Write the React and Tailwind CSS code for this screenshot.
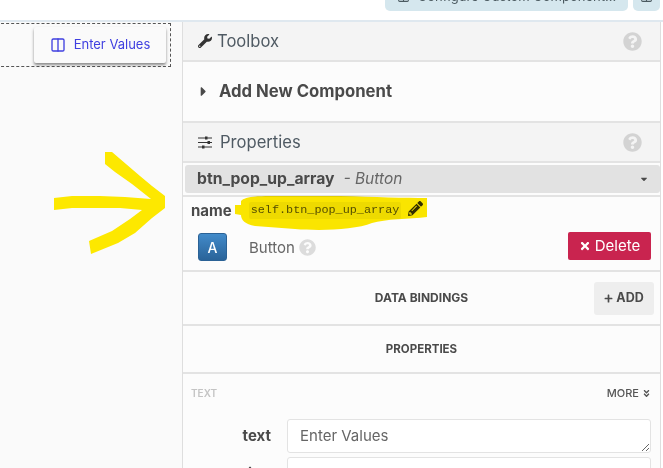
import React from 'react';
import { FaWrench, FaQuestionCircle, FaPencilAlt, FaTimes, FaPlus, FaCaretRight, FaCaretDown, FaAngleDoubleDown } from 'react-icons/fa';
import { LuColumns2 } from 'react-icons/lu';

function PanelHeader({ icon, title }) {
    return (
        <div className="h-[40px] flex items-center pl-[15px] pr-[18px] bg-[#f4f4f4] border-b-2 border-[#e3e3e3]">
            {icon}
            <span className="text-[16.6px] text-[#4f5a63]">{title}</span>
            <FaQuestionCircle className="ml-auto text-[19px] text-[#d3d3d3]" />
        </div>
    );
}

function SlidersIcon() {
    return (
        <svg className="mr-[8px] text-[#333]" width="14" height="13" viewBox="0 0 14 13" fill="currentColor">
            <rect x="0" y="1.5" width="14" height="1" />
            <rect x="0" y="6" width="14" height="1" />
            <rect x="0" y="10.5" width="14" height="1" />
            <rect x="7" y="0.5" width="2.5" height="3" />
            <rect x="9.5" y="5" width="2.5" height="3" />
            <rect x="4" y="9.5" width="2.5" height="3" />
        </svg>
    );
}

export default function App() {
    return (
        <div className="relative w-[663px] h-[468px] overflow-hidden bg-white font-['Inter','Noto_Sans',sans-serif] text-[#4a4a4a]">
            {/* top toolbar, cut off by the crop */}
            <div className="h-[22px] flex justify-end gap-[5px] pr-[3px] border-b-2 border-[#dfe8ef] overflow-hidden">
                <div className="w-[243px] h-[29px] -mt-[18px] flex items-center justify-center gap-2 rounded-[5px] bg-[#d5e7ee] text-[13px] text-[#4b5a60] whitespace-nowrap">
                    <LuColumns2 className="text-[13px]" />
                    Configure Custom Component...
                </div>
                <div className="w-[27px] h-[29px] -mt-[18px] flex items-center justify-center rounded-[5px] bg-[#d5e7ee] text-[#4b5a60]">
                    <LuColumns2 className="text-[13px]" />
                </div>
            </div>

            <div className="flex h-[446px]">
                {/* design canvas */}
                <div className="w-[182px] shrink-0 bg-[#fafafa] pr-[11px]">
                    <div className="h-[44px] mt-[1px] -ml-[4px] flex justify-end pt-[3px] pr-[4px] border border-dashed border-[#555]">
                        <div className="w-[132px] h-[36px] flex items-center justify-center gap-[8px] rounded-[2px] bg-[#fafafa] shadow-[0_2px_3px_rgba(0,0,0,0.45)] text-[13px] text-[#3f3fe0]">
                            <LuColumns2 className="text-[16px]" />
                            Enter Values
                        </div>
                    </div>
                </div>

                {/* side panel */}
                <div className="w-[479px] shrink-0 bg-[#fcfcfc] border-x border-[#dedede]">
                    <PanelHeader icon={<FaWrench className="text-[14px] text-[#333] mr-[5px]" />} title="Toolbox" />
                    <div className="h-[61px] flex items-center pl-[13px] border-b-2 border-[#e3e3e3]">
                        <FaCaretRight className="text-[15px] mr-[8px] text-[#4a4a4a]" />
                        <span className="text-[16.7px] font-bold">Add New Component</span>
                    </div>
                    <PanelHeader icon={<SlidersIcon />} title="Properties" />

                    <div className="h-[28px] mt-[2px] ml-[2px] flex items-center pl-[12px] pr-[11px] rounded-[3px] bg-[#e2e2e2] text-[15.7px]">
                        <span className="font-bold">btn_pop_up_array</span>
                        <span className="italic text-[15.5px] text-[#666] ml-[9px]">- Button</span>
                        <FaCaretDown className="ml-auto text-[10px]" />
                    </div>

                    <div className="h-[38px] mt-[2px] flex items-start pl-[8px] pt-[3px] border-t-2 border-[#e3e3e3]">
                        <span className="text-[15px] font-bold leading-[22px]">name</span>
                        <span className="ml-[17px] mt-[2px] px-[2px] rounded-[2px] bg-[#f0f0f0] font-['Liberation_Mono',monospace] text-[11.8px] leading-[17px] text-[#555]">self.btn_pop_up_array</span>
                        <FaPencilAlt className="ml-[7px] mt-[1px] text-[15px] text-[#333]" />
                    </div>

                    <div className="h-[39px] flex items-start pl-[15px] pr-[9px] border-b-2 border-[#e3e3e3]">
                        <div className="w-[29px] h-[28px] flex items-center justify-center rounded-[3px] border border-[#2b6296] bg-gradient-to-b from-[#428bca] to-[#2a6399] text-[14px] font-medium text-white">A</div>
                        <span className="ml-[22px] mt-[4px] text-[15px] text-[#666]">Button</span>
                        <FaQuestionCircle className="ml-[4px] mt-[6px] text-[17px] text-[#dcdcdc]" />
                        <div className="ml-auto w-[83px] h-[28px] -mt-[1px] flex items-center justify-center gap-[4px] rounded-[2px] bg-[#c9244f] text-[15px] text-white">
                            <FaTimes className="text-[12px]" />
                            Delete
                        </div>
                    </div>

                    <div className="relative h-[54px] flex items-center justify-center border-b-2 border-[#e3e3e3] text-[12px] font-bold">
                        DATA BINDINGS
                        <div className="absolute left-[411px] top-[10px] w-[60px] h-[33px] flex items-center justify-center gap-[3px] rounded-[3px] bg-[#eeeeee] text-[12.5px]">
                            <FaPlus className="text-[9px]" />
                            ADD
                        </div>
                    </div>
                    <div className="h-[48px] flex items-center justify-center pt-[1px] border-b-2 border-[#e3e3e3] text-[11.5px] font-bold">PROPERTIES</div>

                    <div className="flex items-center pt-[11px] pl-[8px] pr-[9px]">
                        <span className="text-[10px] font-semibold text-[#c4c4c4]">TEXT</span>
                        <span className="ml-auto text-[11px] font-medium text-[#555]">MORE</span>
                        <FaAngleDoubleDown className="ml-[3px] text-[9px] text-[#555]" />
                    </div>

                    <div className="flex mt-[17px] pr-[9px]">
                        <span className="w-[88px] pt-[6px] text-right text-[15px] font-bold">text</span>
                        <textarea
                            readOnly
                            value="Enter Values"
                            className="ml-[16px] flex-1 h-[34px] px-[12px] py-[5px] rounded-[3px] border border-[#e3e3e3] bg-white text-[15px] leading-[22px] text-[#666]"
                        />
                    </div>
                    <div className="flex mt-[4px] pr-[9px]">
                        <span className="w-[88px] pt-[6px] text-right text-[15px] font-bold">align</span>
                        <div className="ml-[16px] flex-1 h-[34px] rounded-[3px] border border-[#e3e3e3] bg-white" />
                    </div>
                </div>
            </div>

            {/* yellow marker scribbles on top of the screenshot */}
            <svg className="absolute inset-0 pointer-events-none" width="663" height="468" viewBox="0 0 663 468">
                <path
                    fill="#fde800"
                    fillRule="evenodd"
                    d="M105 152 L112 152 L140 176 L152 186 L165 196 L165 208 L152 218 L135 233 L118 243 L91 254 L89 241 L112 231 L130 219 L142 210 L120 208 L100 208 L72 208 L54 210 L54 198 L72 196 L100 196 L125 197 L151 199 L132 184 L115 172 L105 164 Z"
                />
                <path
                    fill="#fde800"
                    style={{ mixBlendMode: 'multiply' }}
                    d="M241 201 C244 197 255 196 270 196 L340 196 C375 197 405 198 427 198 L427 217 C410 219 385 219 372 223 C355 230 320 231 295 229 L255 226 C245 224 241 220 241 215 L235 214 L235 205 L241 205 Z"
                />
            </svg>
        </div>
    );
}
